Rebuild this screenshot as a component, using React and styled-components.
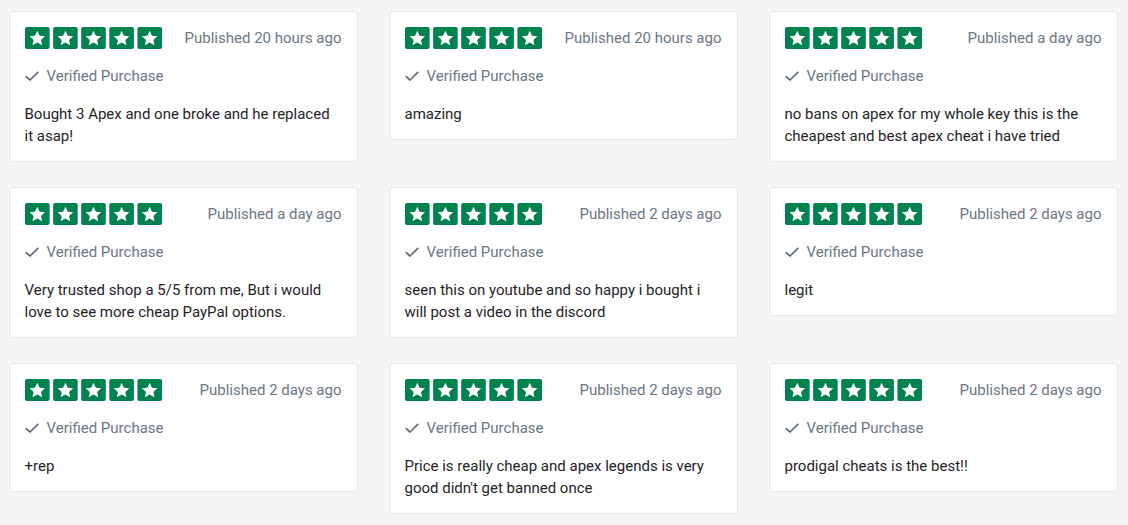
import React from "react";
import styled, { createGlobalStyle } from "styled-components";

const GlobalStyle = createGlobalStyle`
  html, body { margin: 0; padding: 0; background: #f4f5f7; }
  body { font-family: Roboto, "Liberation Sans", Arial, sans-serif; -webkit-font-smoothing: antialiased; }
  * { box-sizing: border-box; }
`;

const Grid = styled.div`
  display: grid;
  grid-template-columns: repeat(3, 349px);
  column-gap: 31px;
  row-gap: 25px;
  align-items: start;
  padding: 11px 0 0 8.5px;
`;

const Card = styled.div`
  background: #fff;
  border: 1px solid #e3e6ea;
  border-radius: 4px;
  padding: 15px 15px 14px 15px;
`;

const Header = styled.div`
  display: flex;
  align-items: center;
  justify-content: space-between;
  height: 22px;
`;

const Published = styled.span`
  font-size: 15px;
  color: #6b7684;
  line-height: 22px;
`;

const Verified = styled.div`
  display: flex;
  align-items: center;
  gap: 8px;
  margin-top: 16px;
  font-size: 15px;
  line-height: 22px;
  color: #6b7684;
`;

const Body = styled.p`
  margin: 16px 0 0;
  font-size: 15px;
  line-height: 22px;
  color: #1f2328;
`;

const StarPath =
  "M7 0.6 L8.85 4.6 L13.2 5.05 L9.95 8 L10.85 12.3 L7 10.1 L3.15 12.3 L4.05 8 L0.8 5.05 L5.15 4.6 Z";

const Stars = () => (
  <svg width="137" height="22" viewBox="0 0 137 22" aria-hidden="true">
    {[0, 1, 2, 3, 4].map((i) => (
      <g key={i} transform={`translate(${i * 28.1} 0)`}>
        <rect x="0" y="0" width="24.6" height="22" rx="2" fill="#00824f" />
        <path d={StarPath} transform="translate(3.55 2.9) scale(1.25)" fill="#fff" />
      </g>
    ))}
  </svg>
);

const Check = () => (
  <svg width="14" height="14" viewBox="0 0 14 14" aria-hidden="true">
    <polyline
      points="1.2,7.6 5,11 12.8,3.4"
      fill="none"
      stroke="#5f6a77"
      strokeWidth="1.7"
      strokeLinecap="round"
      strokeLinejoin="round"
    />
  </svg>
);

const reviews = [
  { when: "Published 20 hours ago", text: "Bought 3 Apex and one broke and he replaced it asap!" },
  { when: "Published 20 hours ago", text: "amazing" },
  { when: "Published a day ago", text: "no bans on apex for my whole key this is the cheapest and best apex cheat i have tried" },
  { when: "Published a day ago", text: "Very trusted shop a 5/5 from me, But i would love to see more cheap PayPal options." },
  { when: "Published 2 days ago", text: "seen this on youtube and so happy i bought i will post a video in the discord" },
  { when: "Published 2 days ago", text: "legit" },
  { when: "Published 2 days ago", text: "+rep" },
  { when: "Published 2 days ago", text: "Price is really cheap and apex legends is very good didn't get banned once" },
  { when: "Published 2 days ago", text: "prodigal cheats is the best!!" },
];

export default function App() {
  return (
    <>
      <GlobalStyle />
      <Grid>
        {reviews.map((r, i) => (
          <Card key={i}>
            <Header>
              <Stars />
              <Published>{r.when}</Published>
            </Header>
            <Verified>
              <Check />
              <span>Verified Purchase</span>
            </Verified>
            <Body>{r.text}</Body>
          </Card>
        ))}
      </Grid>
    </>
  );
}
